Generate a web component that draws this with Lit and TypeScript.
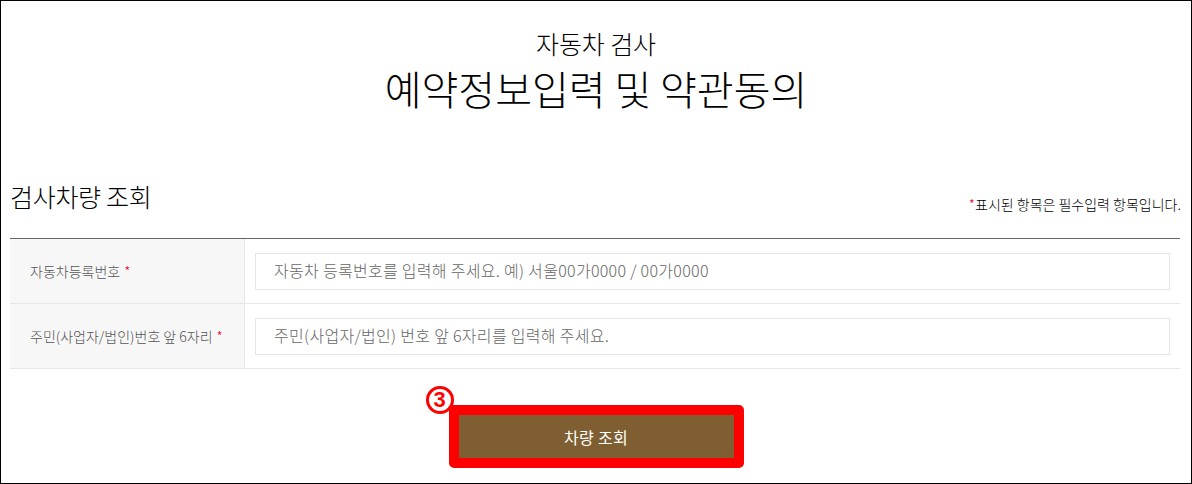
import { LitElement, html, css } from "lit";
import { customElement } from "lit/decorators.js";

@customElement("app-root")
export class AppRoot extends LitElement {
  static styles = css`
    :host {
      display: block;
      width: 1192px;
      height: 484px;
      box-sizing: border-box;
      border: 1px solid #000;
      background: #fff;
      overflow: hidden;
      font-family: "Noto Sans CJK KR", "Noto Sans", sans-serif;
      color: #000;
    }
    .head {
      display: flex;
      flex-direction: column;
      align-items: center;
      padding-top: 27px;
      height: 175px;
      box-sizing: border-box;
    }
    .sub { font-size: 25px; line-height: 30px; font-weight: 300; letter-spacing: -0.1px; }
    .title { font-size: 40px; line-height: 58px; font-weight: 300; margin-top: 1px; letter-spacing: 0; }
    .sec {
      display: flex;
      justify-content: space-between;
      align-items: flex-start;
      padding: 4px 10px 0 9px;
      height: 62px;
      box-sizing: border-box;
    }
    .sec h3 { margin: 0; font-size: 25px; line-height: 32px; font-weight: 300; letter-spacing: -0.3px; }
    .note { font-size: 14px; line-height: 18px; margin-top: 15px; font-weight: 300; letter-spacing: 0; }
    .req { color: #e8002d; }
    .table { margin: 0 11px 0 9px; border-top: 1px solid #666; }
    .row { display: grid; grid-template-columns: 235px 1fr; height: 65px; border-bottom: 1px solid #e6e6e6; box-sizing: border-box; }
    .th {
      background: #f7f7f7;
      border-right: 1px solid #e6e6e6;
      display: flex;
      align-items: center;
      padding-left: 20px;
      font-size: 14px;
      font-weight: 300;
      color: #555;
      letter-spacing: 0;
    }
    .th .req { margin-left: 4px; }
    .td { display: flex; align-items: center; padding: 0 10px; }
    .input {
      flex: 1;
      height: 37px;
      box-sizing: border-box;
      border: 1px solid #e6e6e6;
      display: flex;
      align-items: center;
      padding: 0 0 2px 18px;
      font-size: 16px;
      font-weight: 300;
      color: #666;
      letter-spacing: 0.3px;
    }
    .actions { display: flex; justify-content: center; padding-top: 36px; }
    .mark { position: relative; }
    .btn {
      display: flex;
      align-items: center;
      justify-content: center;
      box-sizing: border-box;
      width: 295px;
      height: 63px;
      border: 10px solid #f00;
      border-radius: 5px;
      background: #7f5f32;
      color: #fff;
      font-size: 16px;
      font-weight: 400;
      letter-spacing: 0.3px;
      background-clip: padding-box;
    }
    .badge {
      position: absolute;
      left: -23px;
      top: -19px;
      width: 28px;
      height: 28px;
      box-sizing: border-box;
      border: 3px solid #f00;
      border-radius: 50%;
      background: #fff;
      color: #f00;
      font: 700 22px/22px "Liberation Sans", sans-serif;
      text-align: center;
    }
  `;

  render() {
    return html`
      <div class="head">
        <div class="sub">자동차 검사</div>
        <div class="title">예약정보입력 및 약관동의</div>
      </div>
      <div class="sec">
        <h3>검사차량 조회</h3>
        <div class="note"><span class="req">*</span>표시된 항목은 필수입력 항목입니다.</div>
      </div>
      <div class="table">
        <div class="row">
          <div class="th">자동차등록번호<span class="req">*</span></div>
          <div class="td"><div class="input">자동차 등록번호를 입력해 주세요. 예) 서울00가0000 / 00가0000</div></div>
        </div>
        <div class="row">
          <div class="th">주민(사업자/법인)번호 앞 6자리<span class="req">*</span></div>
          <div class="td"><div class="input">주민(사업자/법인) 번호 앞 6자리를 입력해 주세요.</div></div>
        </div>
      </div>
      <div class="actions">
        <div class="mark">
          <div class="btn">차량 조회</div>
          <div class="badge">3</div>
        </div>
      </div>
    `;
  }
}
